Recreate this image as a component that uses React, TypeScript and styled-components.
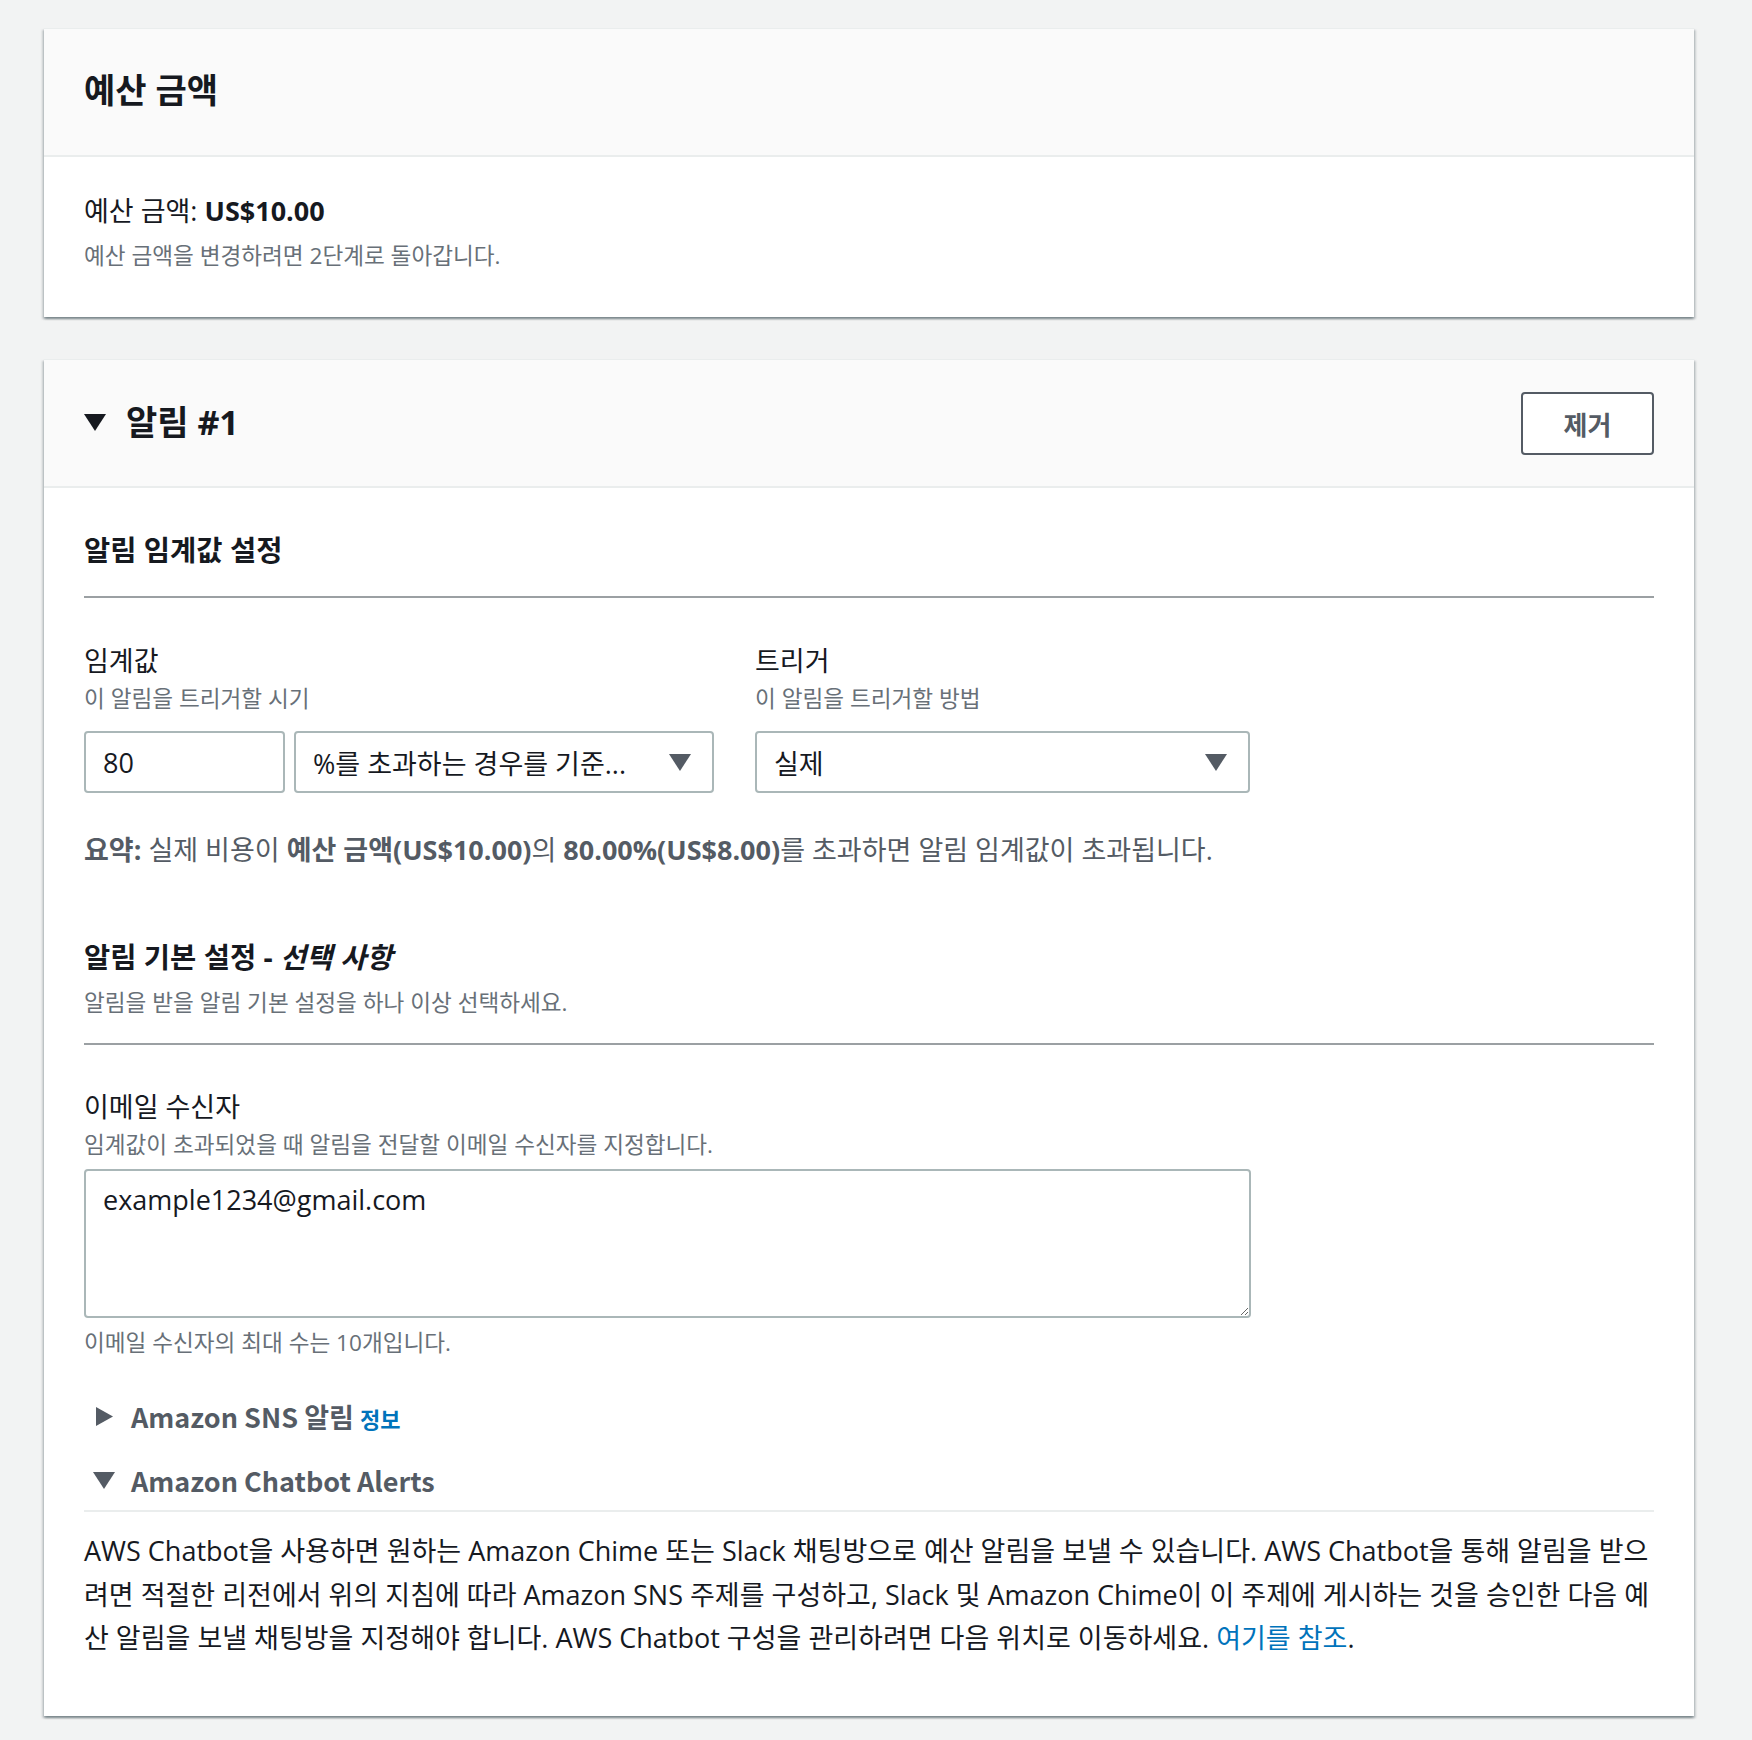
import React from "react"
import styled, { createGlobalStyle } from "styled-components"

const GlobalStyle = createGlobalStyle`
  html, body {
    margin: 0;
    padding: 0;
    background: #f2f3f3;
  }
  body {
    font-family: "Open Sans", "Noto Sans CJK KR", sans-serif;
    color: #16191f;
  }
  * {
    box-sizing: border-box;
  }
`

const Caret: React.FC<{ dir: "down" | "right"; color?: string }> = ({
  dir,
  color = "#16191f",
}) =>
  dir === "down" ? (
    <svg width="22" height="17" viewBox="0 0 22 17">
      <polygon points="0,0 22,0 11,17" fill={color} />
    </svg>
  ) : (
    <svg width="17" height="19" viewBox="0 0 17 19">
      <polygon points="0,0 17,9.5 0,19" fill={color} />
    </svg>
  )

const App: React.FC<{}> = () => {
  return (
    <Page>
      <GlobalStyle />
      <Card>
        <CardHeader>
          <Title>예산 금액</Title>
        </CardHeader>
        <AmountBody>
          <AmountLine>
            예산 금액: <b>US$10.00</b>
          </AmountLine>
          <Description $gap={12}>
            예산 금액을 변경하려면 2단계로 돌아갑니다.
          </Description>
        </AmountBody>
      </Card>

      <Card>
        <CardHeader>
          <HeaderLeft>
            <Caret dir="down" />
            <Title>알림 #1</Title>
          </HeaderLeft>
          <RemoveButton>제거</RemoveButton>
        </CardHeader>
        <AlertBody>
          <SectionTitle>알림 임계값 설정</SectionTitle>
          <Divider $top={24} />

          <FieldRow>
            <Field $width={630}>
              <Label>임계값</Label>
              <Description $gap={6}>이 알림을 트리거할 시기</Description>
              <Controls>
                <TextInput $width={201}>80</TextInput>
                <Select $width={420}>
                  <span>%를 초과하는 경우를 기준...</span>
                  <Caret dir="down" color="#545b64" />
                </Select>
              </Controls>
            </Field>
            <Field $width={495}>
              <Label>트리거</Label>
              <Description $gap={6}>이 알림을 트리거할 방법</Description>
              <Controls>
                <Select $width={495}>
                  <span>실제</span>
                  <Caret dir="down" color="#545b64" />
                </Select>
              </Controls>
            </Field>
          </FieldRow>

          <Summary>
            <b>요약:</b> 실제 비용이 <b>예산 금액(US$10.00)</b>의{" "}
            <b>80.00%(US$8.00)</b>를 초과하면 알림 임계값이 초과됩니다.
          </Summary>

          <SectionTitle $top={67}>
            알림 기본 설정 - <i>선택 사항</i>
          </SectionTitle>
          <Description $gap={9}>
            알림을 받을 알림 기본 설정을 하나 이상 선택하세요.
          </Description>
          <Divider $top={25} />

          <Label $top={45}>이메일 수신자</Label>
          <Description $gap={6}>
            임계값이 초과되었을 때 알림을 전달할 이메일 수신자를 지정합니다.
          </Description>
          <EmailArea defaultValue="example1234@gmail.com" />
          <Description $gap={10}>이메일 수신자의 최대 수는 10개입니다.</Description>

          <Expander $top={38}>
            <CaretBox>
              <Caret dir="right" color="#545b64" />
            </CaretBox>
            <span>
              Amazon SNS 알림 <InfoLink>정보</InfoLink>
            </span>
          </Expander>
          <Expander $top={24} $open>
            <CaretBox>
              <Caret dir="down" color="#545b64" />
            </CaretBox>
            <span>Amazon Chatbot Alerts</span>
          </Expander>
          <Paragraph>
            AWS Chatbot을 사용하면 원하는 Amazon Chime 또는 Slack 채팅방으로 예산
            알림을 보낼 수 있습니다. AWS Chatbot을 통해 알림을 받으려면 적절한
            리전에서 위의 지침에 따라 Amazon SNS 주제를 구성하고, Slack 및 Amazon
            Chime이 이 주제에 게시하는 것을 승인한 다음 예산 알림을 보낼 채팅방을
            지정해야 합니다. AWS Chatbot 구성을 관리하려면 다음 위치로 이동하세요.{" "}
            <Link>여기를 참조</Link>.
          </Paragraph>
        </AlertBody>
      </Card>
    </Page>
  )
}

const Page = styled.div`
  display: flex;
  flex-direction: column;
  gap: 42px;
  padding: 28px 58px 25px 44px;
`

const Card = styled.section`
  background: #fff;
  border-top: 1px solid #eaeded;
  box-shadow: 0 2px 2px 0 rgba(0, 28, 36, 0.3),
    2px 2px 2px 0 rgba(0, 28, 36, 0.15), -2px 2px 2px 0 rgba(0, 28, 36, 0.15);
`

const CardHeader = styled.header`
  height: 128px;
  padding: 0 40px 4px;
  display: flex;
  align-items: center;
  justify-content: space-between;
  background: #fafafa;
  border-bottom: 2px solid #eaeded;
`

const HeaderLeft = styled.div`
  display: flex;
  align-items: center;
  gap: 20px;
  margin-top: 2px;
`

const Title = styled.h2`
  margin: 0;
  font-size: 34px;
  line-height: 42px;
  font-weight: 700;
  color: #16191f;
`

const RemoveButton = styled.button`
  width: 133px;
  height: 63px;
  margin-top: 5px;
  background: #fff;
  border: 2px solid #545b64;
  border-radius: 4px;
  font-family: "Noto Sans CJK KR", sans-serif;
  font-size: 26px;
  font-weight: 700;
  color: #545b64;
`

const AmountBody = styled.div`
  padding: 36px 40px 46px;
`

const AmountLine = styled.div`
  font-size: 27px;
  line-height: 36px;
  b {
    font-weight: 700;
  }
`

const Description = styled.div<{ $gap?: number }>`
  margin-top: ${p => p.$gap ?? 0}px;
  font-size: 22.6px;
  line-height: 30px;
  color: #687078;
`

const AlertBody = styled.div`
  padding: 40px 40px 56px;
`

const SectionTitle = styled.h3<{ $top?: number }>`
  margin: ${p => p.$top ?? 0}px 0 0;
  font-size: 28.5px;
  line-height: 44px;
  font-weight: 700;
  i {
    font-style: italic;
  }
`

const Divider = styled.hr<{ $top: number }>`
  margin: ${p => p.$top}px 0 0;
  border: none;
  height: 2px;
  background: #9ba0a3;
`

const FieldRow = styled.div`
  display: flex;
  gap: 41px;
  margin-top: 46px;
`

const Field = styled.div<{ $width: number }>`
  width: ${p => p.$width}px;
  display: flex;
  flex-direction: column;
`

const Label = styled.div<{ $top?: number }>`
  margin-top: ${p => p.$top ?? 0}px;
  font-size: 27px;
  line-height: 34px;
  color: #16191f;
`

const Controls = styled.div`
  display: flex;
  gap: 9px;
  margin-top: 17px;
`

const TextInput = styled.div<{ $width: number }>`
  width: ${p => p.$width}px;
  height: 62px;
  padding: 0 17px;
  display: flex;
  align-items: center;
  border: 2px solid #aab7b8;
  border-radius: 4px;
  font-size: 27px;
  color: #16191f;
`

const Select = styled(TextInput)`
  justify-content: space-between;
  padding-right: 21px;
`

const Summary = styled.div`
  margin-top: 39px;
  font-size: 27px;
  line-height: 36px;
  color: #545b64;
  b {
    font-weight: 700;
  }
`

const EmailArea = styled.textarea`
  display: block;
  width: 1167px;
  height: 149px;
  margin-top: 9px;
  padding: 12px 17px;
  border: 2px solid #aab7b8;
  border-radius: 4px;
  font-family: inherit;
  font-size: 27px;
  line-height: 34px;
  color: #16191f;
  resize: vertical;
`

const Expander = styled.div<{ $top: number; $open?: boolean }>`
  display: flex;
  align-items: center;
  gap: 15px;
  margin-top: ${p => p.$top}px;
  padding-left: 8px;
  padding-bottom: ${p => (p.$open ? 10 : 0)}px;
  height: ${p => (p.$open ? 52 : 40)}px;
  border-bottom: ${p => (p.$open ? "2px solid #eaeded" : "none")};
  font-family: "Noto Sans CJK KR", sans-serif;
  font-size: 27px;
  font-weight: 700;
  color: #545b64;
`

const CaretBox = styled.span`
  width: 24px;
  display: flex;
  justify-content: center;
`

const InfoLink = styled.span`
  font-size: 22px;
  font-weight: 700;
  color: #0073bb;
`

const Paragraph = styled.p`
  margin: 17px 0 0;
  font-size: 27px;
  line-height: 43.5px;
  color: #16191f;
`

const Link = styled.span`
  color: #0073bb;
`

export default App
